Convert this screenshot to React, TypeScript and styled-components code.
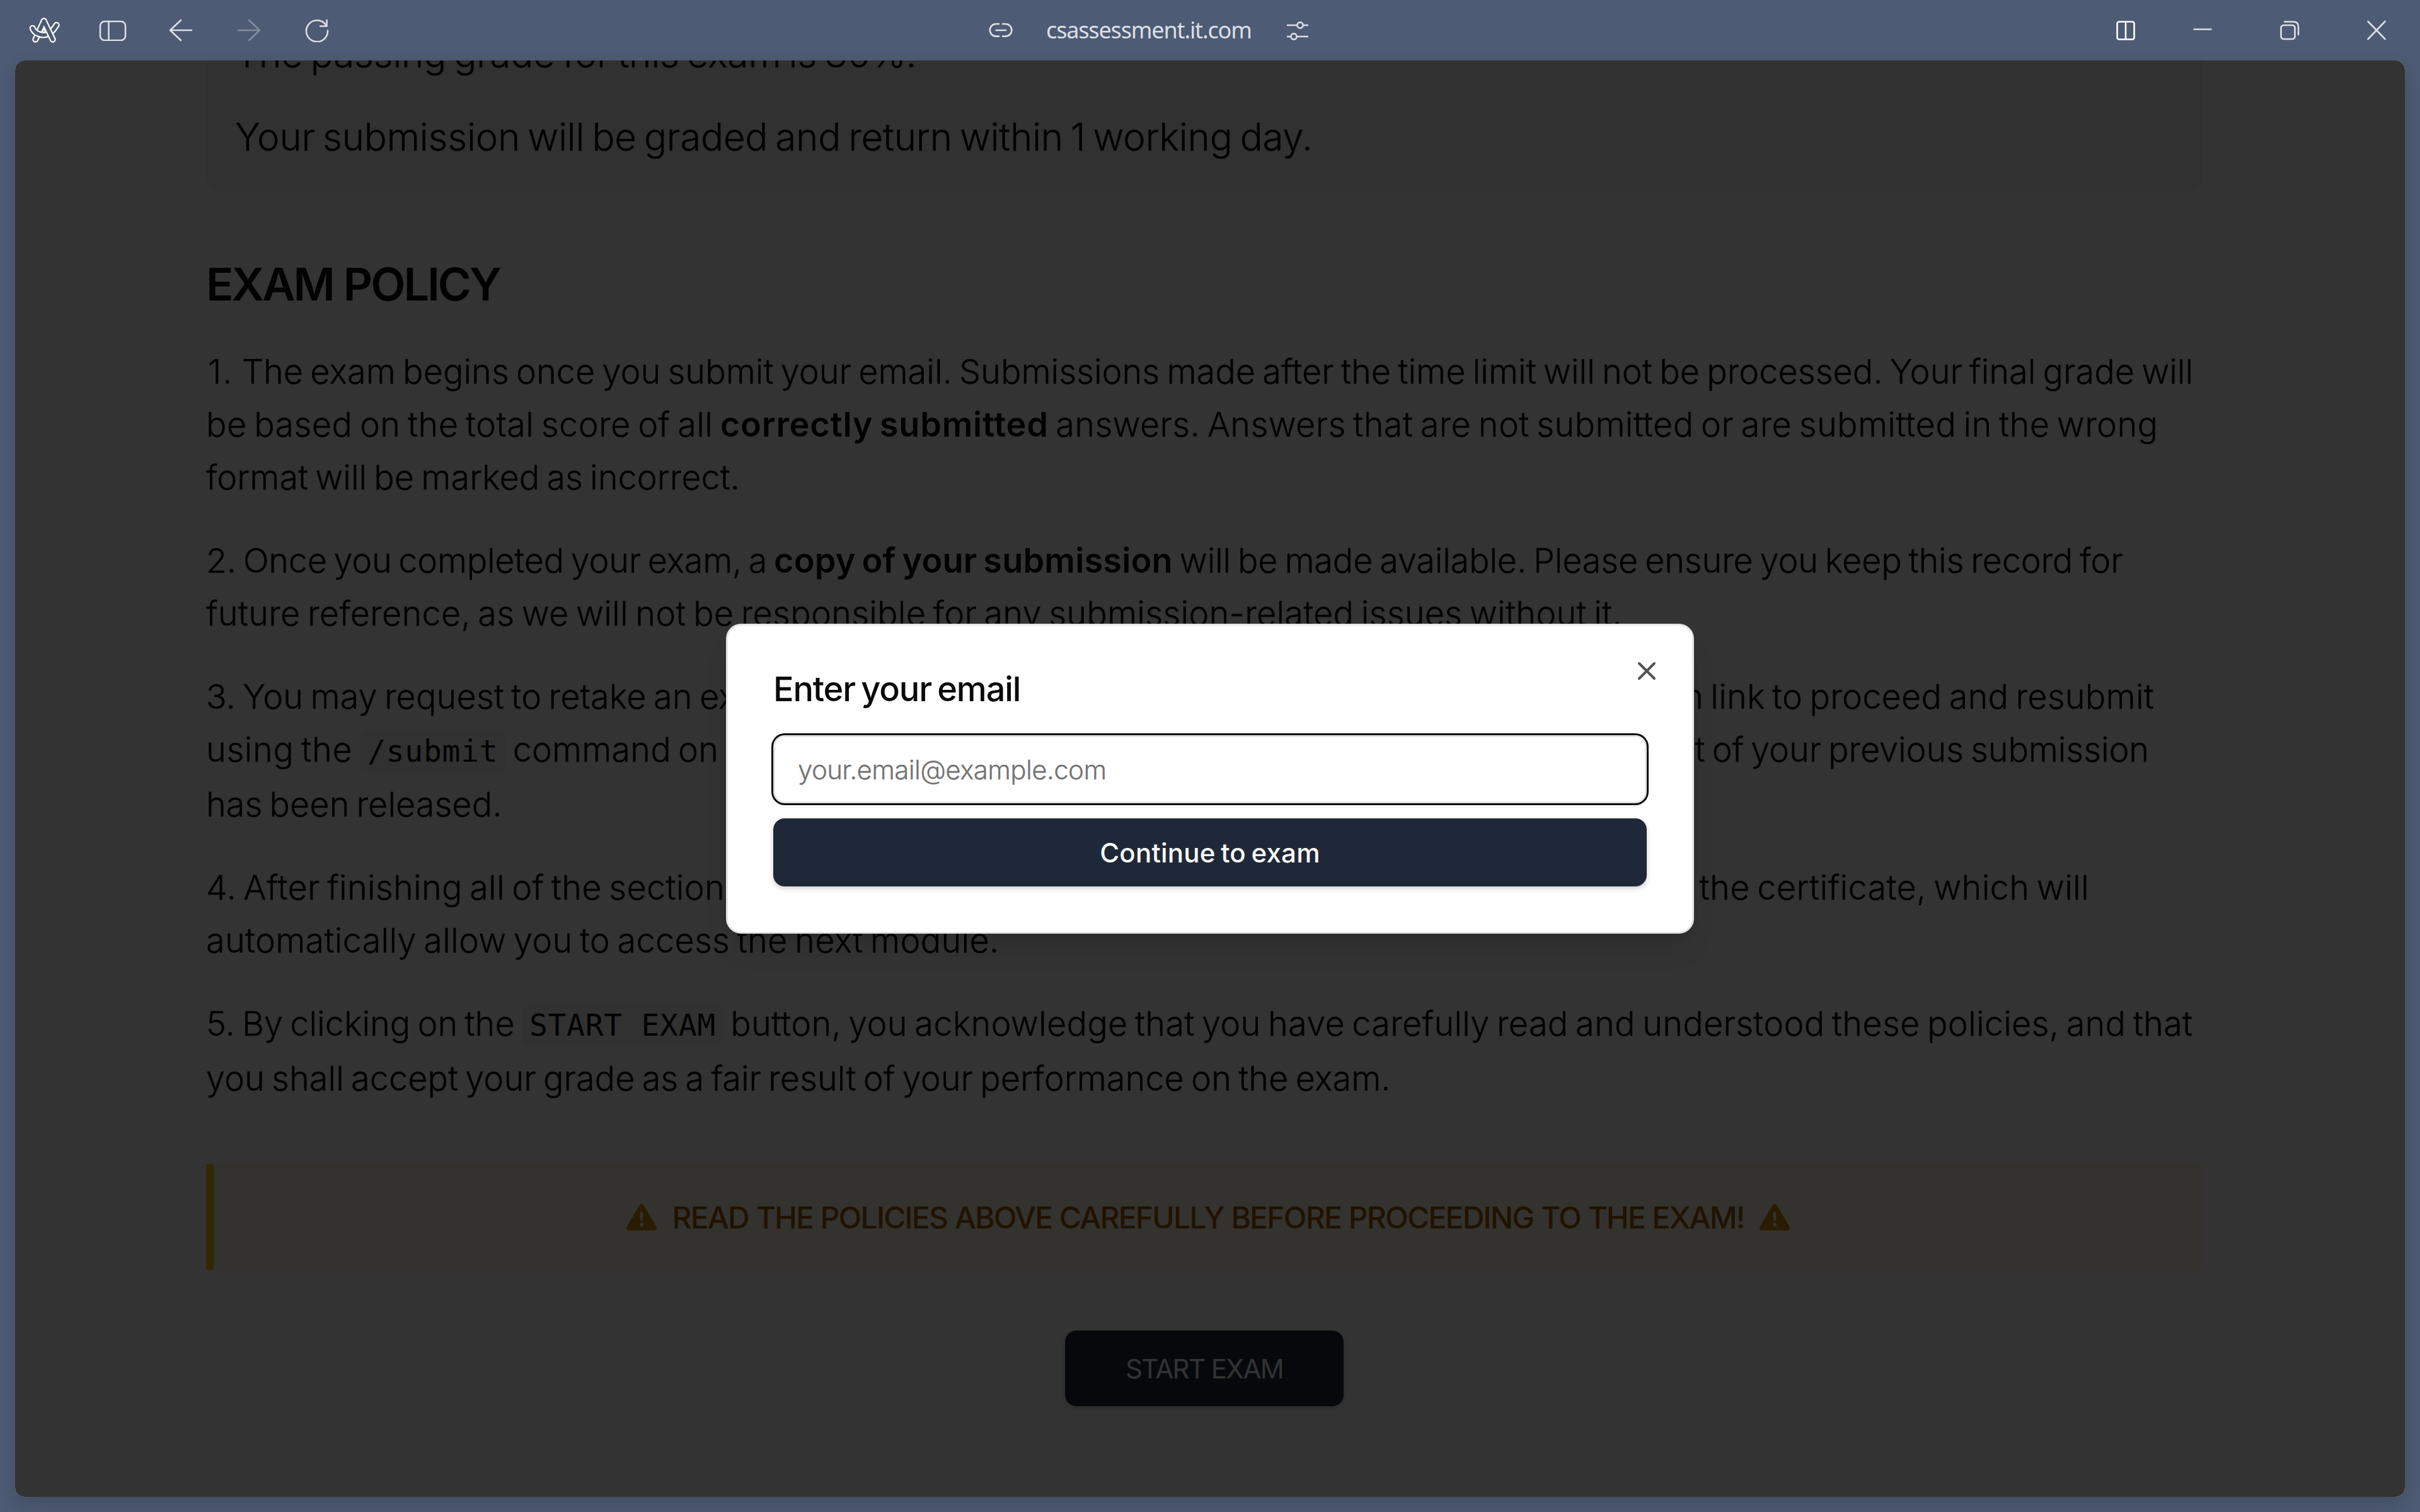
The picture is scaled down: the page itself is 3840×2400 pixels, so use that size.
import React from 'react'
import styled, { createGlobalStyle } from 'styled-components'
import { FaTriangleExclamation } from 'react-icons/fa6'
import { X } from 'lucide-react'

const GlobalStyle = createGlobalStyle`
  * {
    box-sizing: border-box;
  }
  body {
    margin: 0;
    background: #4d5b74;
    font-family: Inter, 'Liberation Sans', sans-serif;
    color: #0a0a0a;
  }
`

const Window = styled.div`
  width: 3840px;
  height: 2400px;
  display: flex;
  flex-direction: column;
  padding: 0 24px 24px;
  overflow: hidden;
  background: #4d5b74;
`

const Toolbar = styled.header`
  flex: none;
  height: 96px;
  margin: 0 -24px;
  display: flex;
  align-items: center;
  color: #dcdfe6;
  & svg {
    display: block;
    flex: none;
    fill: none;
    stroke: currentColor;
    stroke-width: 2.6;
    stroke-linecap: round;
    stroke-linejoin: round;
  }
`

const NavGroup = styled.div`
  width: 1568px;
  padding-left: 46px;
  display: flex;
  align-items: center;
  gap: 60px;
`

const AddressGroup = styled.div`
  flex: 1;
  display: flex;
  align-items: center;
  gap: 52px;
`

const Address = styled.span`
  width: 329px;
  font-family: 'Noto Sans', 'Open Sans', sans-serif;
  font-size: 36px;
  line-height: 48px;
  letter-spacing: -1.15px;
  white-space: nowrap;
`

const WindowGroup = styled.div`
  display: flex;
  align-items: center;
  padding-right: 52px;
`

const ToolButton = styled.button<{ $gap?: number; $dim?: boolean; $bright?: boolean }>`
  display: flex;
  padding: 0;
  border: 0;
  background: none;
  margin-left: ${(props) => props.$gap ?? 0}px;
  color: ${(props) => (props.$bright ? '#ffffff' : '#dcdfe6')};
  opacity: ${(props) => (props.$dim ? 0.38 : 1)};
`

const PageShadow = styled.div`
  flex: 1;
  min-height: 0;
  display: flex;
  border-radius: 15px;
  box-shadow: 0 12px 30px rgba(0, 0, 0, 0.16);
`

const Page = styled.main`
  position: relative;
  flex: 1;
  min-height: 0;
  border-radius: 15px;
  overflow: hidden;
  background: #ffffff;
`

const Content = styled.div`
  width: 3168px;
  margin: -102px 0 0 303px;
  display: flex;
  flex-direction: column;
`

const GradeCard = styled.section`
  height: 312px;
  padding: 49px 46px 47px;
  display: flex;
  flex-direction: column;
  gap: 48px;
  border-radius: 24px;
  background: #f5f5f5;
`

const GradeText = styled.p`
  margin: 0;
  font-size: 60px;
  line-height: 84px;
  font-weight: 300;
  letter-spacing: -0.24px;
  word-spacing: -4.5px;
  white-space: nowrap;
  -webkit-text-stroke: 0.4px currentColor;
`

const Heading = styled.h2`
  margin: 91px 0 43px;
  font-size: 72px;
  line-height: 108px;
  font-weight: 600;
  letter-spacing: -3.1px;
  word-spacing: 1px;
`

const Policies = styled.div`
  display: flex;
  flex-direction: column;
  gap: 48px;
`

const Policy = styled.div`
  font-size: 54px;
  font-weight: 300;
`

const Line = styled.div<{ $tall?: boolean; $end?: number }>`
  display: flex;
  justify-content: space-between;
  height: ${(props) => (props.$tall ? 87 : 84)}px;
  padding-right: ${(props) => props.$end ?? 0}px;
  line-height: 84px;
  word-spacing: -4px;
  white-space: pre;
`

const Run = styled.span<{ $track?: number }>`
  letter-spacing: ${(props) => props.$track ?? 0}px;
  -webkit-text-stroke: 0.4px currentColor;
`

const ListNumber = styled(Run)`
  padding-left: 3px;
`

const Strong = styled.strong<{ $track?: number }>`
  font-weight: 600;
  letter-spacing: ${(props) => props.$track ?? 0}px;
`

const Code = styled.code`
  padding: 3px 12px 4px;
  border-radius: 12px;
  background: #f5f5f5;
  font-family: 'DejaVu Sans Mono', monospace;
  font-size: 48px;
  font-weight: 400;
  letter-spacing: 0.7px;
  word-spacing: 0;
`

const Banner = styled.div`
  height: 168px;
  margin-top: 94px;
  display: flex;
  align-items: center;
  justify-content: center;
  gap: 24px;
  border-left: 12px solid #facc15;
  background: #fefae4;
  color: #ca8a04;
  font-size: 48px;
`

const BannerText = styled.span`
  color: #a16207;
  font-weight: 500;
  letter-spacing: -1.8px;
  word-spacing: 0.5px;
  white-space: nowrap;
`

const StartButton = styled.button`
  align-self: center;
  width: 442px;
  height: 120px;
  margin-top: 96px;
  padding: 0;
  border: 0;
  border-radius: 18px;
  background: #1e293b;
  color: #fafafa;
  font-family: inherit;
  font-size: 42px;
  font-weight: 400;
  letter-spacing: -1.6px;
  box-shadow: 0 3px 9px rgba(0, 0, 0, 0.2);
`

const Overlay = styled.div`
  position: absolute;
  inset: 0;
  display: flex;
  align-items: center;
  justify-content: center;
  background: rgba(0, 0, 0, 0.8);
`

const Dialog = styled.div`
  position: relative;
  width: 1536px;
  height: 492px;
  padding: 72px;
  display: flex;
  flex-direction: column;
  gap: 24px;
  border: 3px solid #e5e5e5;
  border-radius: 24px;
  background: #ffffff;
  box-shadow: 0 30px 45px -9px rgba(0, 0, 0, 0.1), 0 12px 18px -12px rgba(0, 0, 0, 0.1);
`

const DialogTitle = styled.h3`
  margin: 2px 0 22px;
  font-size: 54px;
  line-height: 54px;
  font-weight: 500;
  letter-spacing: -1.1px;
  word-spacing: -4px;
`

const EmailInput = styled.input`
  height: 108px;
  padding: 0 36px;
  border: 3px solid #e5e5e5;
  border-radius: 18px;
  outline: none;
  box-shadow: 0 0 0 3px #0a0a0a, 0 3px 6px 3px rgba(0, 0, 0, 0.05);
  font-family: inherit;
  font-size: 42px;
  font-weight: 300;
  letter-spacing: -0.6px;
  &::placeholder {
    color: #737373;
    opacity: 1;
    -webkit-text-stroke: 0.3px #737373;
  }
`

const ContinueButton = styled.button`
  height: 108px;
  padding: 0;
  border: 0;
  border-radius: 18px;
  background: #1f2838;
  color: #fafafa;
  font-family: inherit;
  font-size: 42px;
  font-weight: 500;
  letter-spacing: 0.25px;
  word-spacing: -3px;
  box-shadow: 0 3px 9px rgba(0, 0, 0, 0.2);
`

const CloseButton = styled.button`
  position: absolute;
  top: 48px;
  right: 48px;
  display: flex;
  padding: 0;
  border: 0;
  background: none;
  color: #535353;
`

const ArcLogo = () => {
  const left = 'M101 27 L61 115'
  const smile = 'M47 61 C57 88 94 101 121 89 C141 79 152 60 161 46'
  const right = 'M101 27 L143 115'
  const tube = (d: string) => (
    <>
      <path d={d} stroke="#ffffff" strokeWidth="30" />
      <path d={d} stroke="#4d5b74" strokeWidth="17" />
    </>
  )
  return (
    <svg width="51" height="42" viewBox="30 8 153 126">
      {tube(left)}
      {tube(smile)}
      {tube(right)}
      <path d="M101 27 L85 63" stroke="#4d5b74" strokeWidth="17" />
      <path d="M101 62 L93 80 Q101 83 109 80 Z" stroke="#ffffff" strokeWidth="6" />
    </svg>
  )
}

const BrowserToolbar = () => (
  <Toolbar>
    <NavGroup>
      <ToolButton $bright>
        <ArcLogo />
      </ToolButton>
      <ToolButton>
        <svg width="44" height="34" viewBox="0 -2 44 34">
          <rect x="2" y="1" width="40" height="30" rx="7" />
          <path d="M15.5 1 V31" />
        </svg>
      </ToolButton>
      <ToolButton $gap={7}>
        <svg width="38" height="36" viewBox="0 0 38 36">
          <path d="M19 2 L2 18 L19 34 M2 18 H36" />
        </svg>
      </ToolButton>
      <ToolButton $gap={10} $dim>
        <svg width="38" height="36" viewBox="0 0 38 36">
          <path d="M19 2 L36 18 L19 34 M36 18 H2" />
        </svg>
      </ToolButton>
      <ToolButton $gap={10}>
        <svg width="38" height="38" viewBox="0 -1 38 38">
          <path d="M36 18.5 A17 17 0 1 1 33 9.6 L34.5 11.5 M34.5 2 V11.5 H24" />
        </svg>
      </ToolButton>
    </NavGroup>
    <AddressGroup>
      <svg width="40" height="26" viewBox="0 0 40 26">
        <path d="M17 3 H12.5 A9.8 9.8 0 0 0 12.5 22.6 H17 M23 3 H27.5 A9.8 9.8 0 0 1 27.5 22.6 H23 M12.5 13 H28" />
      </svg>
      <Address>csassessment.it.com</Address>
      <svg width="36" height="32" viewBox="0 -1 36 32">
        <path d="M2 7 H17 M27 7 H34 M2 25 H7 M17 25 H34" />
        <circle cx="22" cy="7" r="4.6" />
        <circle cx="12" cy="25" r="4.6" />
      </svg>
    </AddressGroup>
    <WindowGroup>
      <ToolButton $bright>
        <svg width="34" height="34" viewBox="0 -2 34 34">
          <rect x="3.5" y="1.5" width="27" height="28" rx="3" />
          <path d="M17 3 V29" />
        </svg>
      </ToolButton>
      <ToolButton $gap={88}>
        <svg width="34" height="32" viewBox="0 0 34 32">
          <path d="M3.5 14.5 H30.5" />
        </svg>
      </ToolButton>
      <ToolButton $gap={104}>
        <svg width="34" height="34" viewBox="0 0 34 34">
          <rect x="3.5" y="9" width="22" height="22" rx="4" />
          <path d="M9 3.5 H23 Q31 3.5 31 11.5 V24" />
        </svg>
      </ToolButton>
      <ToolButton $gap={104}>
        <svg width="34" height="32" viewBox="0 0 34 32">
          <path d="M3.5 2 L30.5 30 M30.5 2 L3.5 30" />
        </svg>
      </ToolButton>
    </WindowGroup>
  </Toolbar>
)

const ExamPolicies = () => (
  <Policies>
    <Policy>
      <Line>
        <span>
          <ListNumber $track={2}>{'1. '}</ListNumber>
          <Run $track={0.01}>
            The exam begins once you submit your email. Submissions made after the time limit will not be processed. Your final grade will
          </Run>
        </span>
      </Line>
      <Line>
        <span>
          <Run $track={0.38}>{'be based on the total score of all '}</Run>
          <Strong $track={0.8}>correctly submitted</Strong>
          <Run $track={0.34}> answers. Answers that are not submitted or are submitted in the wrong</Run>
        </span>
      </Line>
      <Line>
        <Run>format will be marked as incorrect.</Run>
      </Line>
    </Policy>
    <Policy>
      <Line>
        <span>
          <Run $track={-0.3}>{'2. Once you completed your exam, a '}</Run>
          <Strong $track={0.2}>copy of your submission</Strong>
          <Run $track={-0.18}> will be made available. Please ensure you keep this record for</Run>
        </span>
      </Line>
      <Line>
        <Run $track={0.23}>
          future reference, as we will not be responsible for any submission-related issues without it.
        </Run>
      </Line>
    </Policy>
    <Policy>
      <Line $end={77}>
        <Run $track={0.1}>3. You may request to retake an exam</Run>
        <Run $track={0.2}>exam link to proceed and resubmit</Run>
      </Line>
      <Line $tall $end={85}>
        <span>
          <Run $track={0.6}>{'using the '}</Run>
          <Code>/submit</Code>
          <Run $track={0.1}> command on Discord</Run>
        </span>
        <Run $track={-0.1}>result of your previous submission</Run>
      </Line>
      <Line>
        <Run>has been released.</Run>
      </Line>
    </Policy>
    <Policy>
      <Line $end={180}>
        <Run $track={0.26}>4. After finishing all of the sections</Run>
        <Run $track={0.34}>the certificate, which will</Run>
      </Line>
      <Line>
        <Run $track={0.26}>automatically allow you to access the next module.</Run>
      </Line>
    </Policy>
    <Policy>
      <Line $tall>
        <span>
          <Run>{'5. By clicking on the '}</Run>
          <Code>START EXAM</Code>
          <Run $track={0.25}> button, you acknowledge that you have carefully read and understood these policies, and that</Run>
        </span>
      </Line>
      <Line>
        <Run $track={0.03}>you shall accept your grade as a fair result of your performance on the exam.</Run>
      </Line>
    </Policy>
  </Policies>
)

const EmailDialog = () => (
  <Overlay>
    <Dialog role="dialog">
      <DialogTitle>Enter your email</DialogTitle>
      <EmailInput type="email" placeholder="your.email@example.com" />
      <ContinueButton>Continue to exam</ContinueButton>
      <CloseButton aria-label="Close">
        <X size={48} strokeWidth={2} />
      </CloseButton>
    </Dialog>
  </Overlay>
)

export default function App() {
  return (
    <>
      <GlobalStyle />
      <Window>
        <BrowserToolbar />
        <PageShadow>
          <Page>
            <Content>
              <GradeCard>
                <GradeText>The passing grade for this exam is 80%.</GradeText>
                <GradeText>Your submission will be graded and return within 1 working day.</GradeText>
              </GradeCard>
              <Heading>EXAM POLICY</Heading>
              <ExamPolicies />
              <Banner>
                <FaTriangleExclamation />
                <BannerText>READ THE POLICIES ABOVE CAREFULLY BEFORE PROCEEDING TO THE EXAM!</BannerText>
                <FaTriangleExclamation />
              </Banner>
              <StartButton>START EXAM</StartButton>
            </Content>
            <EmailDialog />
          </Page>
        </PageShadow>
      </Window>
    </>
  )
}
